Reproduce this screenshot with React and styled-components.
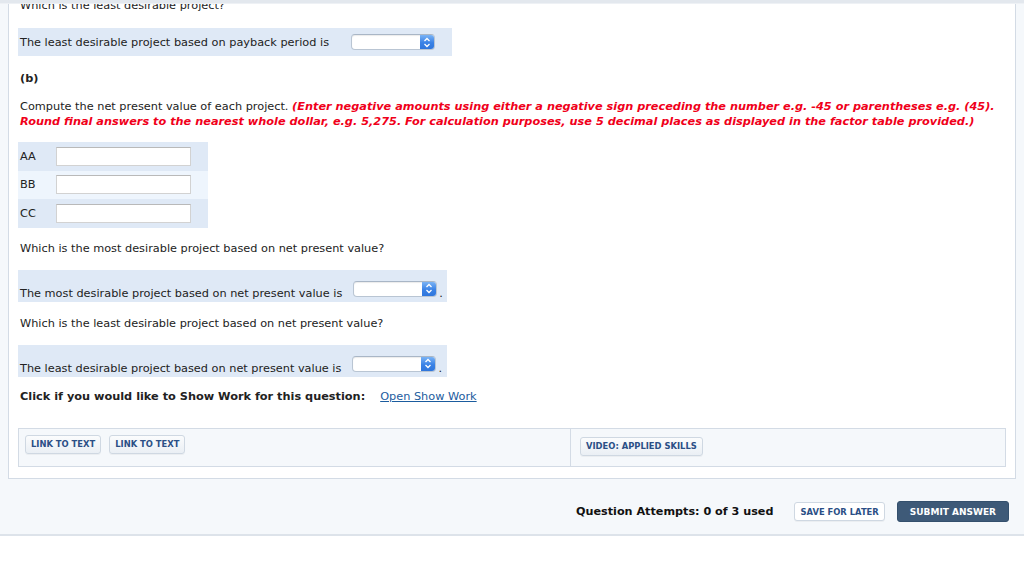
import React from "react";
import styled, { createGlobalStyle } from "styled-components";

const GlobalStyle = createGlobalStyle`
  html, body {
    margin: 0;
    padding: 0;
    background: #fff;
  }
  body {
    font-family: "DejaVu Sans", Verdana, sans-serif;
    font-size: 11.3px;
    color: #222;
  }
`;

const rows = ["AA", "BB", "CC"];

const Select = ({ $mb }) => (
  <SelectBox $mb={$mb}>
    <SelectArrow>
      <svg width="8" height="11" viewBox="0 0 8 11">
        <path
          d="M1.5 4 L4 1.5 L6.5 4 M1.5 7 L4 9.5 L6.5 7"
          fill="none"
          stroke="#fff"
          strokeWidth="1.3"
        />
      </svg>
    </SelectArrow>
  </SelectBox>
);

const App = () => {
  return (
    <>
      <GlobalStyle />
      <Page>
        <TopStrip />
        <Panel>
          <Question $mt={2}>Which is the least desirable project?</Question>
          <AnswerRow $height={28} $align="center" $width={434} $mt={15}>
            The least desirable project based on payback period is
            <Spacer $w={22} />
            <Select />
          </AnswerRow>

          <PartLabel>(b)</PartLabel>
          <Instructions>
            Compute the net present value of each project.{" "}
            <Warn>
              (Enter negative amounts using either a negative sign preceding the
              number e.g. -45 or parentheses e.g. (45). Round final answers to
              the nearest whole dollar, e.g. 5,275. For calculation purposes, use
              5 decimal places as displayed in the factor table provided.)
            </Warn>
          </Instructions>

          <ValueTable>
            {rows.map((r, i) => (
              <ValueRow key={r} $alt={i % 2 === 1}>
                <ValueLabel>{r}</ValueLabel>
                <TextInput />
              </ValueRow>
            ))}
          </ValueTable>

          <Question $mt={13}>
            Which is the most desirable project based on net present value?
          </Question>
          <AnswerRow $height={32} $align="flex-end" $width={429} $mt={14}>
            The most desirable project based on net present value is
            <Spacer $w={11} />
            <Select $mb={4} />
            <Dot>.</Dot>
          </AnswerRow>

          <Question $mt={14}>
            Which is the least desirable project based on net present value?
          </Question>
          <AnswerRow $height={32} $align="flex-end" $width={429} $mt={14}>
            The least desirable project based on net present value is
            <Spacer $w={11} />
            <Select $mb={4} />
            <Dot>.</Dot>
          </AnswerRow>

          <ShowWork>
            <strong>Click if you would like to Show Work for this question:</strong>
            <WorkLink href="#">Open Show Work</WorkLink>
          </ShowWork>

          <LinkBox>
            <LinkCol $w={551}>
              <SmallButton>Link to Text</SmallButton>
              <SmallButton>Link to Text</SmallButton>
            </LinkCol>
            <LinkCol $divider $pt={8}>
              <SmallButton>Video: Applied Skills</SmallButton>
            </LinkCol>
          </LinkBox>
        </Panel>

        <Footer>
          <Attempts>Question Attempts: 0 of 3 used</Attempts>
          <SmallButton $footer>Save for Later</SmallButton>
          <SubmitButton>Submit Answer</SubmitButton>
        </Footer>
      </Page>
    </>
  );
};

export default App;

const Page = styled.div`
  width: 1024px;
  height: 566px;
  background: #fff;
  overflow: hidden;
`;

const TopStrip = styled.div`
  position: relative;
  z-index: 1;
  height: 3px;
  background: #e3e8ee;
  border-bottom: 1px solid #eef1f5;
`;

const Panel = styled.div`
  margin: -8px 8px 0 8px;
  padding: 0 9px 11px 9px;
  background: #fff;
  border: 1px solid #d3dbe5;
  border-top: none;
  overflow: hidden;
  box-shadow: 0 0 0 8px #f5f8fb;
  position: relative;
`;

const Question = styled.div`
  line-height: 15px;
  padding-left: 2px;
  margin-top: ${(p) => p.$mt || 0}px;
`;

const AnswerRow = styled.div`
  display: flex;
  align-items: ${(p) => p.$align};
  width: ${(p) => p.$width}px;
  height: ${(p) => p.$height}px;
  box-sizing: border-box;
  padding: 0 2px ${(p) => (p.$align === "flex-end" ? "1px" : "0")} 2px;
  margin-top: ${(p) => p.$mt}px;
  background: #dfe9f6;
  line-height: 15px;
  white-space: nowrap;
`;

const Spacer = styled.span`
  display: inline-block;
  width: ${(p) => p.$w}px;
`;

const Dot = styled.span`
  margin-left: 2px;
`;

const SelectBox = styled.span`
  display: inline-flex;
  justify-content: flex-end;
  width: 84px;
  height: 16px;
  flex: none;
  box-sizing: border-box;
  background: #fff;
  border: 1px solid #b9c5d3;
  border-top-color: #a9b6c6;
  border-radius: 4px;
  overflow: hidden;
  box-shadow: inset 0 1px 1px rgba(0, 0, 0, 0.08);
  margin-bottom: ${(p) => p.$mb || 0}px;
`;

const SelectArrow = styled.span`
  display: flex;
  align-items: center;
  justify-content: center;
  width: 14px;
  height: 100%;
  background: linear-gradient(#7ab3f5, #3a82e6 55%, #2f76dc);
`;

const PartLabel = styled.div`
  font-weight: bold;
  line-height: 15px;
  margin-top: 15px;
  padding-left: 2px;
`;

const Instructions = styled.div`
  line-height: 15px;
  margin-top: 13px;
  padding-left: 2px;
`;

const Warn = styled.span`
  color: #f0001a;
  font-weight: bold;
  font-style: italic;
`;

const ValueTable = styled.div`
  width: 190px;
  margin-top: 13px;
`;

const ValueRow = styled.div`
  display: flex;
  align-items: center;
  height: 28.67px;
  padding-left: 2px;
  background: ${(p) => (p.$alt ? "#eef5fd" : "#dfe9f6")};
`;

const ValueLabel = styled.span`
  width: 36px;
`;

const TextInput = styled.input`
  width: 135px;
  height: 19px;
  box-sizing: border-box;
  border: 1px solid #d2d2d2;
  border-top-color: #b9b9b9;
  background: #fff;
  padding: 0 3px;
  font: inherit;
`;

const ShowWork = styled.div`
  display: flex;
  gap: 15px;
  line-height: 15px;
  margin-top: 12px;
  padding-left: 2px;
`;

const WorkLink = styled.a`
  color: #1b5c9e;
  text-decoration: underline;
`;

const LinkBox = styled.div`
  display: flex;
  margin-top: 24px;
  height: 39px;
  box-sizing: border-box;
  background: #f5f8fb;
  border: 1px solid #d3dbe5;
`;

const LinkCol = styled.div`
  display: flex;
  align-items: flex-start;
  gap: 8px;
  box-sizing: border-box;
  padding: ${(p) => p.$pt || 6}px 6px 0 ${(p) => (p.$divider ? 9 : 6)}px;
  width: ${(p) => (p.$w ? `${p.$w}px` : "auto")};
  flex: ${(p) => (p.$w ? "none" : 1)};
  border-left: ${(p) => (p.$divider ? "1px solid #d3dbe5" : "none")};
  height: 100%;
`;

const SmallButton = styled.button`
  font-family: "DejaVu Sans", Verdana, sans-serif;
  font-size: 8.4px;
  font-weight: bold;
  text-transform: uppercase;
  color: #2b4f86;
  height: 19px;
  padding: 0 5px;
  background: ${(p) =>
    p.$footer ? "#fff" : "linear-gradient(#fbfcfd, #eaeff4)"};
  border: 1px solid #cfd8e2;
  border-radius: 3px;
  box-shadow: 0 1px 0 rgba(0, 0, 0, 0.04);
  cursor: pointer;
  white-space: nowrap;
`;

const Footer = styled.div`
  display: flex;
  align-items: center;
  justify-content: flex-end;
  gap: 12px;
  height: 57px;
  box-sizing: border-box;
  padding: 11px 15px 0 0;
  background: #f5f8fb;
  border-bottom: 2px solid #dde3ea;
`;

const Attempts = styled.span`
  font-weight: bold;
  font-size: 11.2px;
  color: #111;
  margin-right: 9px;
`;

const SubmitButton = styled.button`
  font-family: "DejaVu Sans", Verdana, sans-serif;
  font-size: 9px;
  font-weight: bold;
  text-transform: uppercase;
  color: #fff;
  height: 21px;
  padding: 0 12px;
  background: #3e5a78;
  border: 1px solid #34506d;
  border-radius: 3px;
  cursor: pointer;
`;
